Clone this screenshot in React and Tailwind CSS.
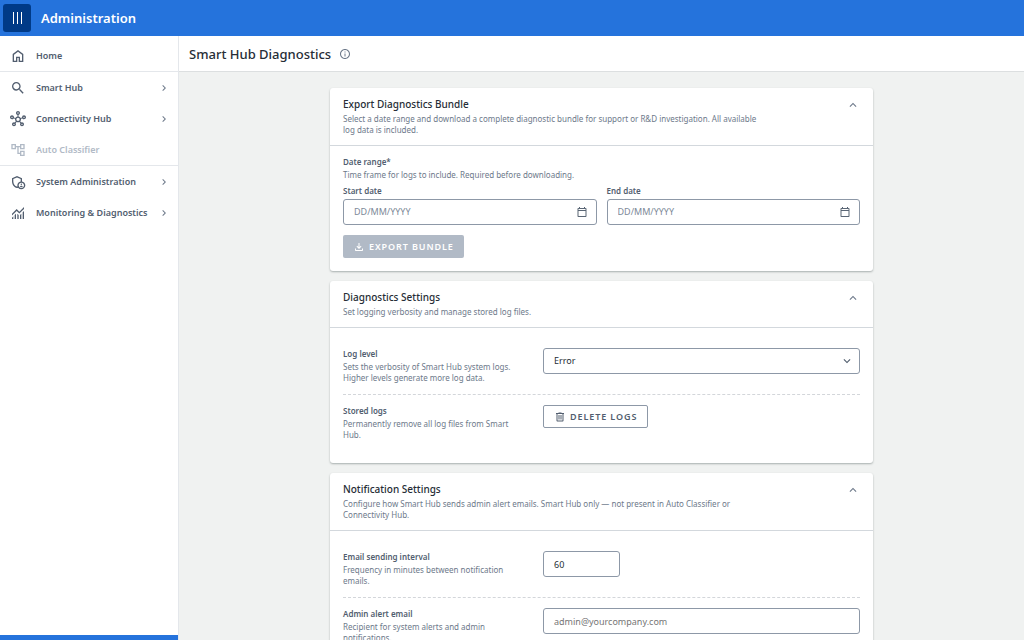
import { useState } from "react";
import {
  MdChevronRight,
  MdExpandLess,
  MdInfoOutline,
  MdKeyboardArrowDown,
  MdOutlineAccountTree,
  MdOutlineAdminPanelSettings,
  MdOutlineFileDownload,
  MdOutlineHub,
  MdSearch,
} from "react-icons/md";

function Symbol({ d, className }) {
  return (
    <svg viewBox="0 -960 960 960" fill="currentColor" aria-hidden="true" className={className}>
      <path d={d} />
    </svg>
  );
}

const HOME =
  "M240-200h120v-240h240v240h120v-360L480-740 240-560v360Zm-80 80v-480l320-240 320 240v480H520v-240h-80v240H160Z";
const MONITORING =
  "M120-120v-80l80-80v160h-80Zm160 0v-240l80-80v320h-80Zm160 0v-320l80 81v239h-80Zm160 0v-239l80-80v319h-80Zm160 0v-400l80-80v480h-80ZM120-327v-113l280-280 160 160 280-280v113L560-447 400-607 120-327Z";
const CALENDAR =
  "M200-80q-33 0-56.500-23.500T120-160v-560q0-33 23.500-56.500T200-800h40v-80h80v80h320v-80h80v80h40q33 0 56.500 23.500T840-720v560q0 33-23.500 56.500T760-80H200Zm0-80h560v-400H200v400Zm0-480h560v-80H200v80Z";
const TRASH =
  "M280-120q-33 0-56.500-23.500T200-200v-520h-40v-80h200v-40h240v40h200v80h-40v520q0 33-23.500 56.500T680-120H280Zm400-600H280v520h400v-520ZM360-280h80v-360h-80v360Zm160 0h80v-360h-80v360Z";

function HomeIcon({ className }) {
  return <Symbol d={HOME} className={className} />;
}

function MonitoringIcon({ className }) {
  return <Symbol d={MONITORING} className={className} />;
}

function NavItem({ icon: Icon, label, expandable, disabled }) {
  return (
    <li>
      <a
        href="#"
        aria-disabled={disabled}
        className={`flex h-[31px] items-center pr-2 pl-2.5 text-[9px] leading-4 font-semibold ${
          disabled ? "text-[#b1bac6]" : "text-[#525e6f]"
        }`}
      >
        <span className="flex w-4 justify-center">
          <Icon className="size-4 shrink-0" />
        </span>
        <span className="ml-2.5 flex-1">{label}</span>
        {expandable && <MdChevronRight className="size-3 text-[#6d798a]" />}
      </a>
    </li>
  );
}

function Card({ title, description, children }) {
  const [open, setOpen] = useState(true);
  return (
    <section className="rounded-[3px] bg-white shadow-[0_1px_2px_rgba(60,75,75,0.4)]">
      <header className="flex items-start border-b border-[#d3d8dd] px-[13px] pt-2 pb-2.5">
        <div className="flex-1">
          <h2 className="text-[10px] leading-[17px] font-medium text-[#262d36]">{title}</h2>
          <p className="max-w-[416px] text-[8px] leading-[11px] text-[#6d798a]">{description}</p>
        </div>
        <button
          type="button"
          aria-label={`Toggle ${title}`}
          aria-expanded={open}
          onClick={() => setOpen(!open)}
          className="mt-0.5 text-[#6d798a]"
        >
          <MdExpandLess className="size-[14px]" />
        </button>
      </header>
      {open && children}
    </section>
  );
}

function SettingRow({ id, label, help, children }) {
  return (
    <div className="flex border-b border-dashed border-[#d3d6da] pt-2.5 pb-[11px] last:border-b-0">
      <div className="w-[200px] shrink-0 pr-[26px]">
        <label htmlFor={id} className="block text-[8px] leading-[11px] font-semibold text-[#525e6f]">
          {label}
        </label>
        <p className="mt-0.5 text-[8px] leading-[11px] text-[#6d798a]">{help}</p>
      </div>
      <div className="min-w-0 flex-1">{children}</div>
    </div>
  );
}

function DateField({ id, label }) {
  return (
    <div className="flex-1">
      <label htmlFor={id} className="block text-[8px] leading-[11px] font-semibold text-[#525e6f]">
        {label}
      </label>
      <div className="mt-[3px] flex h-[26px] items-center rounded-[3px] border border-[#8d98a7] pr-2 pl-2.5">
        <input
          id={id}
          type="text"
          placeholder="DD/MM/YYYY"
          className="min-w-0 flex-1 text-[9px] leading-4 text-[#262d36] outline-none placeholder:text-[#7d8998]"
        />
        <button type="button" aria-label={`Choose ${label.toLowerCase()}`} className="text-[#5a6675]">
          <Symbol d={CALENDAR} className="size-3" />
        </button>
      </div>
    </div>
  );
}

export default function App() {
  return (
    <div className="flex h-screen flex-col bg-[#f0f2f1] font-['Noto_Sans',sans-serif]">
      <header className="flex h-9 shrink-0 items-center gap-2.5 bg-[#2573dc] px-[3px]">
        <button
          type="button"
          aria-label="Menu"
          className="flex size-7 items-center justify-center gap-[3px] rounded-[3px] bg-[#003a87]"
        >
          <span className="h-3 w-px bg-white" />
          <span className="h-3 w-px bg-white" />
          <span className="h-3 w-px bg-white" />
        </button>
        <span className="text-[13px] leading-5 font-semibold text-white">Administration</span>
      </header>

      <div className="flex min-h-0 flex-1">
        <nav className="flex w-[179px] shrink-0 flex-col border-r border-[#e4e7eb] bg-white">
          <ul className="border-b border-[#e4e7eb] pt-1">
            <NavItem icon={HomeIcon} label="Home" />
          </ul>
          <ul className="border-b border-[#e4e7eb]">
            <NavItem icon={MdSearch} label="Smart Hub" expandable />
            <NavItem icon={MdOutlineHub} label="Connectivity Hub" expandable />
            <NavItem icon={MdOutlineAccountTree} label="Auto Classifier" disabled />
          </ul>
          <ul>
            <NavItem icon={MdOutlineAdminPanelSettings} label="System Administration" expandable />
            <NavItem icon={MonitoringIcon} label="Monitoring & Diagnostics" expandable />
          </ul>
          <div className="mt-auto h-[5px] bg-[#2573dc]" />
        </nav>

        <div className="flex min-w-0 flex-1 flex-col">
          <div className="flex h-9 shrink-0 items-center gap-2 border-b border-[#dcdfe0] bg-white px-2.5">
            <h1 className="text-[13px] leading-5 font-medium text-[#262d36]">Smart Hub Diagnostics</h1>
            <button type="button" aria-label="About this page" className="text-[#6d798a]">
              <MdInfoOutline className="size-3" />
            </button>
          </div>

          <main className="min-h-0 flex-1 overflow-y-auto px-4 py-4 [scrollbar-width:none]">
            <div className="mx-auto flex max-w-[543px] flex-col gap-2.5">
              <Card
                title="Export Diagnostics Bundle"
                description="Select a date range and download a complete diagnostic bundle for support or R&D investigation. All available log data is included."
              >
                <div className="px-[13px] pt-2.5 pb-[13px]">
                  <h3 className="text-[8px] leading-[11px] font-semibold text-[#525e6f]">Date range*</h3>
                  <p className="mt-0.5 text-[8px] leading-[11px] text-[#6d798a]">
                    Time frame for logs to include. Required before downloading.
                  </p>
                  <div className="mt-[5px] flex gap-2.5">
                    <DateField id="start-date" label="Start date" />
                    <DateField id="end-date" label="End date" />
                  </div>
                  <button
                    type="button"
                    disabled
                    className="mt-2.5 flex h-[23px] items-center gap-1 rounded-[2px] bg-[#b1bac6] px-2.5 text-[9px] leading-4 font-semibold tracking-widest text-white"
                  >
                    <MdOutlineFileDownload className="size-3" />
                    EXPORT BUNDLE
                  </button>
                </div>
              </Card>

              <Card
                title="Diagnostics Settings"
                description="Set logging verbosity and manage stored log files."
              >
                <div className="px-[13px] pt-2.5 pb-3">
                  <SettingRow
                    id="log-level"
                    label="Log level"
                    help="Sets the verbosity of Smart Hub system logs. Higher levels generate more log data."
                  >
                    <div className="grid items-center">
                      <select
                        id="log-level"
                        defaultValue="Error"
                        className="col-start-1 row-start-1 h-[26px] w-full appearance-none rounded-[3px] border border-[#8d98a7] bg-white px-2.5 text-[9px] leading-4 text-[#262d36]"
                      >
                        <option>Error</option>
                        <option>Warning</option>
                        <option>Info</option>
                        <option>Debug</option>
                      </select>
                      <MdKeyboardArrowDown className="pointer-events-none col-start-1 row-start-1 mr-1.5 size-[14px] justify-self-end text-[#525e6f]" />
                    </div>
                  </SettingRow>
                  <SettingRow
                    id="delete-logs"
                    label="Stored logs"
                    help="Permanently remove all log files from Smart Hub."
                  >
                    <button
                      id="delete-logs"
                      type="button"
                      className="flex h-[23px] items-center gap-1 rounded-[2px] border border-[#8d98a7] px-2.5 text-[9px] leading-4 font-semibold tracking-widest text-[#525e6f]"
                    >
                      <Symbol d={TRASH} className="size-3" />
                      DELETE LOGS
                    </button>
                  </SettingRow>
                </div>
              </Card>

              <Card
                title="Notification Settings"
                description="Configure how Smart Hub sends admin alert emails. Smart Hub only — not present in Auto Classifier or Connectivity Hub."
              >
                <div className="px-[13px] pt-2.5 pb-3">
                  <SettingRow
                    id="interval"
                    label="Email sending interval"
                    help="Frequency in minutes between notification emails."
                  >
                    <input
                      id="interval"
                      type="text"
                      inputMode="numeric"
                      defaultValue="60"
                      className="block h-[26px] w-[77px] rounded-[3px] border border-[#8d98a7] px-2.5 text-[9px] leading-4 text-[#262d36]"
                    />
                  </SettingRow>
                  <SettingRow
                    id="admin-email"
                    label="Admin alert email"
                    help="Recipient for system alerts and admin notifications."
                  >
                    <input
                      id="admin-email"
                      type="email"
                      placeholder="admin@yourcompany.com"
                      className="block h-[26px] w-full rounded-[3px] border border-[#8d98a7] px-2.5 text-[9px] leading-4 text-[#262d36] placeholder:text-[#757575]"
                    />
                  </SettingRow>
                </div>
              </Card>
            </div>
          </main>
        </div>
      </div>
    </div>
  );
}
